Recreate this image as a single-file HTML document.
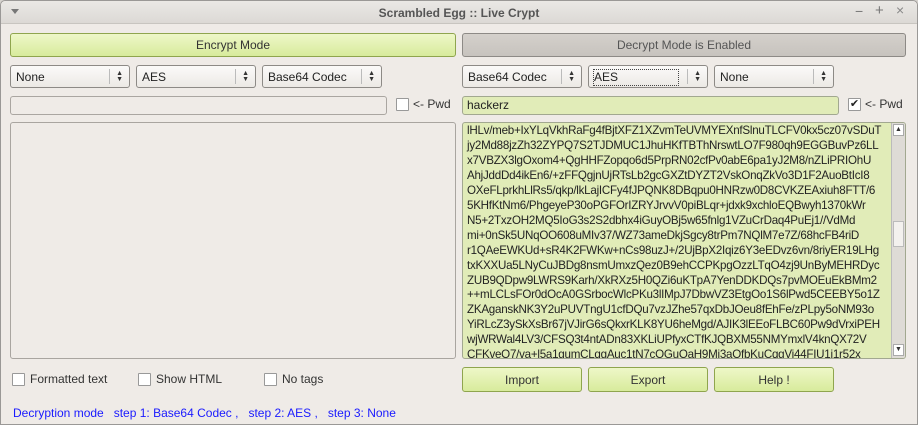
<!DOCTYPE html>
<html><head><style>
*{box-sizing:border-box;margin:0;padding:0}
body{width:918px;height:425px;background:#d6d3ce;font-family:"Liberation Sans",sans-serif;font-size:12px;color:#333;position:relative;overflow:hidden}
.win{position:absolute;left:0;top:0;width:918px;height:425px;background:#efebe7;box-shadow:inset 0 0 0 1px #9a9896;border-radius:5px 5px 0 0}
.tb{position:absolute;left:1px;top:1px;width:916px;height:23px;background:linear-gradient(#eae8e5,#dcd9d5);border-bottom:1px solid #c8c5c0;border-radius:5px 5px 0 0}
.tb .t{position:absolute;left:0;right:0;top:5px;text-align:center;font-weight:bold;color:#555;font-size:12px}
.abs{position:absolute}
.btn{position:absolute;border:1px solid #8fa54e;border-radius:3px;background:linear-gradient(#eef7c8,#d8eb9c);text-align:center;color:#333;font-size:12px}
.combo{position:absolute;height:23px;border:1px solid #8d8a86;border-radius:3px;background:linear-gradient(#fbfaf9,#ece9e5);font-size:12px;padding:4px 0 0 5px;color:#222}
.combo .sep{position:absolute;right:19px;top:3px;bottom:3px;border-left:1px solid #bbb}
.combo .ar{position:absolute;right:6px;top:5px;font-size:7px;line-height:6px;color:#333}
.inp{position:absolute;height:19px;border:1px solid #aaa6a1;border-radius:3px;background:#efebe7}
.cb{position:absolute;width:13px;height:13px;border:1px solid #999;background:#fff;border-radius:1px}
.lbl{position:absolute;font-size:12px;color:#333}
.ta{position:absolute;border:1px solid #a9a5a0;border-radius:3px}
.txt{position:absolute;left:462px;top:123px;width:444px;height:236px;background:#e1ecb8;border:1px solid #a2a890;border-radius:3px;overflow:hidden}
.txt pre{font-family:"Liberation Sans",sans-serif;font-size:11.6px;line-height:14.95px;color:#222;padding:1px 0 0 4px;letter-spacing:-0.25px}
.sb{position:absolute;right:0;top:0;width:14px;height:234px;background:#dedbd6;border-left:1px solid #bbb}
.foot{position:absolute;left:13px;top:406px;color:#1a1aff;font-size:12px}
</style></head><body>
<div class="win">
<div class="tb"><div class="abs" style="left:10px;top:8px;width:0;height:0;border-left:4px solid transparent;border-right:4px solid transparent;border-top:5px solid #777"></div>
<div class="t">Scrambled Egg :: Live Crypt</div>
<div class="abs" style="left:854px;top:2px;color:#777;font-size:14px">−</div>
<div class="abs" style="left:874px;top:1px;color:#777;font-size:15px">+</div>
<div class="abs" style="left:895px;top:1px;color:#888;font-size:14px">×</div>
</div>
<div class="btn" style="left:10px;top:33px;width:446px;height:24px;padding-top:4px">Encrypt Mode</div>
<div class="abs" style="left:462px;top:33px;width:444px;height:24px;border:1px solid #8d8a86;border-radius:3px;background:linear-gradient(#d4d0cb,#c7c3be);text-align:center;padding-top:4px;color:#555">Decrypt Mode is Enabled</div>

<div class="combo" style="left:10px;top:65px;width:120px">None<div class="sep"></div><div class="ar">▲<br>▼</div></div>
<div class="combo" style="left:136px;top:65px;width:120px">AES<div class="sep"></div><div class="ar">▲<br>▼</div></div>
<div class="combo" style="left:262px;top:65px;width:120px">Base64 Codec<div class="sep"></div><div class="ar">▲<br>▼</div></div>
<div class="combo" style="left:462px;top:65px;width:120px">Base64 Codec<div class="sep"></div><div class="ar">▲<br>▼</div></div>
<div class="combo" style="left:588px;top:65px;width:120px"><span style="outline:1px dotted #444;padding:0 60px 1px 0">AES</span><div class="sep"></div><div class="ar">▲<br>▼</div></div>
<div class="combo" style="left:714px;top:65px;width:120px">None<div class="sep"></div><div class="ar">▲<br>▼</div></div>

<div class="inp" style="left:10px;top:96px;width:377px"></div>
<div class="cb" style="left:396px;top:98px"></div>
<div class="lbl" style="left:413px;top:97px">&lt;- Pwd</div>
<div class="inp" style="left:462px;top:96px;width:377px;background:#e1ecb8;border-color:#a2a890;padding:1px 0 0 4px;color:#222">hackerz</div>
<div class="cb" style="left:848px;top:98px;font-size:11px;line-height:11px;text-align:center;color:#222">✔</div>
<div class="lbl" style="left:865px;top:97px">&lt;- Pwd</div>

<div class="ta" style="left:10px;top:122px;width:446px;height:237px"></div>
<div class="txt" style="top:122px;height:237px"><pre>lHLv/meb+IxYLqVkhRaFg4fBjtXFZ1XZvmTeUVMYEXnfSlnuTLCFV0kx5cz07vSDuT
jy2Md88jzZh32ZYPQ7S2TJDMUC1JhuHKfTBThNrswtLO7F980qh9EGGBuvPz6LL
x7VBZX3lgOxom4+QgHHFZopqo6d5PrpRN02cfPv0abE6pa1yJ2M8/nZLiPRIOhU
AhjJddDd4ikEn6/+zFFQgjnUjRTsLb2gcGXZtDYZT2VskOnqZkVo3D1F2AuoBtIcI8
OXeFLprkhLlRs5/qkp/lkLajICFy4fJPQNK8DBqpu0HNRzw0D8CVKZEAxiuh8FTT/6
5KHfKtNm6/PhgeyeP30oPGFOrIZRYJrvvV0piBLqr+jdxk9xchloEQBwyh1370kWr
N5+2TxzOH2MQ5IoG3s2S2dbhx4iGuyOBj5w65fnlg1VZuCrDaq4PuEj1//VdMd
mi+0nSk5UNqOO608uMIv37/WZ73ameDkjSgcy8trPm7NQlM7e7Z/68hcFB4riD
r1QAeEWKUd+sR4K2FWKw+nCs98uzJ+/2UjBpX2Iqiz6Y3eEDvz6vn/8riyER19LHg
txKXXUa5LNyCuJBDg8nsmUmxzQez0B9ehCCPKpgOzzLTqO4zj9UnByMEHRDyc
ZUB9QDpw9LWRS9Karh/XkRXz5H0QZi6uKTpA7YenDDKDQs7pvMOEuEkBMm2
++mLCLsFOr0dOcA0GSrbocWlcPKu3lIMpJ7DbwVZ3EtgOo1S6lPwd5CEEBY5o1Z
ZKAganskNK3Y2uPUVTngU1cfDQu7vzJZhe57qxDbJOeu8fEhFe/zPLpy5oNM93o
YiRLcZ3ySkXsBr67jVJirG6sQkxrKLK8YU6heMgd/AJIK3lEEoFLBC60Pw9dVrxiPEH
wjWRWal4LV3/CFSQ3t4ntADn83XKLiUPfyxCTfKJQBXM55NMYmxlV4knQX72V
CFKveO7/va+l5a1gumCLqgAuc1tN7cOGuOaH9Mi3aOfbKuCqgVi44FIU1i1r52x</pre>
<div class="sb" style="height:235px"><div class="abs" style="left:1px;top:1px;width:11px;height:12px;background:#fff;border:1px solid #aaa;font-size:7px;text-align:center;line-height:10px">▲</div>
<div class="abs" style="left:1px;top:98px;width:11px;height:26px;background:#f3f1ee;border:1px solid #bbb"></div>
<div class="abs" style="left:1px;top:221px;width:11px;height:12px;background:#fff;border:1px solid #aaa;font-size:7px;text-align:center;line-height:10px">▼</div></div>
</div>

<div class="cb" style="left:12px;top:373px"></div><div class="lbl" style="left:30px;top:372px">Formatted text</div>
<div class="cb" style="left:138px;top:373px"></div><div class="lbl" style="left:156px;top:372px">Show HTML</div>
<div class="cb" style="left:264px;top:373px"></div><div class="lbl" style="left:282px;top:372px">No tags</div>

<div class="btn" style="left:462px;top:367px;width:120px;height:25px;padding-top:5px">Import</div>
<div class="btn" style="left:588px;top:367px;width:120px;height:25px;padding-top:5px">Export</div>
<div class="btn" style="left:714px;top:367px;width:120px;height:25px;padding-top:5px">Help !</div>

<div class="foot">Decryption mode &nbsp; step 1: Base64 Codec , &nbsp; step 2: AES , &nbsp; step 3: None</div>
</div>
</body></html>
